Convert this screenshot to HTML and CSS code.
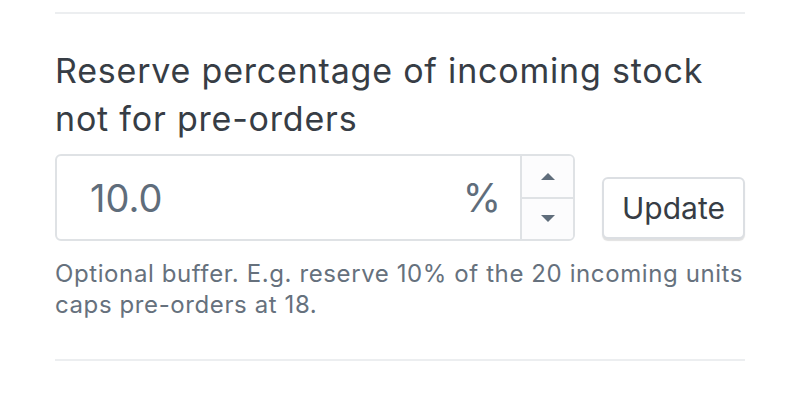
FILE: index.html
```html
<!DOCTYPE html>
<html lang="en">
<head>
<meta charset="utf-8">
<title>Pre-order settings</title>
<link rel="stylesheet" href="styles.css">
</head>
<body>
<div class="section">
  <div class="rule"></div>
  <label class="field-label" for="reserve">Reserve percentage of incoming stock not for pre-orders</label>
  <div class="field-row">
    <div class="number-field">
      <input id="reserve" class="number-input" type="text" value="10.0">
      <span class="suffix">%</span>
      <div class="stepper">
        <button class="step step-up" type="button" aria-label="Increase">
          <svg width="14" height="7" viewBox="0 0 14 7"><path d="M0 7 L7 0 L14 7 Z"/></svg>
        </button>
        <button class="step step-down" type="button" aria-label="Decrease">
          <svg width="14" height="7" viewBox="0 0 14 7"><path d="M0 0 L14 0 L7 7 Z"/></svg>
        </button>
      </div>
    </div>
    <button class="btn" type="button">Update</button>
  </div>
  <p class="help">Optional buffer. E.g. reserve 10% of the 20 incoming units caps pre-orders at 18.</p>
  <div class="rule rule-bottom"></div>
</div>
</body>
</html>
```

FILE: styles.css
```css
html, body {
  margin: 0;
  padding: 0;
  background: #ffffff;
}

body {
  font-family: Inter, "Noto Sans", "Liberation Sans", sans-serif;
  color: #373d45;
}

.section {
  margin: 0 55px;
  padding-top: 12px;
}

.rule {
  height: 2px;
  background: #eceef0;
}

.field-label {
  display: block;
  margin-top: 33px;
  font-size: 34px;
  letter-spacing: 0.8px;
  line-height: 48px;
  font-weight: 400;
  color: #373d45;
}

.field-row {
  display: flex;
  align-items: flex-end;
  gap: 27px;
  margin-top: 11px;
}

.number-field {
  display: flex;
  align-items: stretch;
  width: 520px;
  height: 87px;
  box-sizing: border-box;
  border: 2px solid #dfe2e5;
  border-radius: 6px;
  overflow: hidden;
}

.number-input {
  flex: 1;
  min-width: 0;
  border: 0;
  outline: none;
  padding: 0 0 0 33px;
  font-family: inherit;
  font-size: 38px;
  color: #5f6d7b;
  background: transparent;
}

.suffix {
  display: flex;
  align-items: center;
  padding-right: 19px;
  font-size: 39px;
  color: #5f6d7b;
}

.stepper {
  display: flex;
  flex-direction: column;
  width: 51px;
  border-left: 2px solid #dfe2e5;
}

.step {
  flex: 1;
  display: flex;
  align-items: center;
  justify-content: center;
  padding: 0;
  border: 0;
  background: #fcfcfd;
  fill: #5f6d7b;
}

.step-up {
  border-bottom: 2px solid #dfe2e5;
}

.btn {
  margin-bottom: 2px;
  width: 143px;
  height: 62px;
  box-sizing: border-box;
  border: 2px solid #dcdfe3;
  border-radius: 6px;
  background: #ffffff;
  box-shadow: 0 2px 1px rgba(0, 0, 0, 0.12);
  font-family: inherit;
  font-size: 30px;
  color: #373d45;
}

.help {
  margin: 17px 0 0;
  font-size: 24px;
  letter-spacing: 0.6px;
  line-height: 31px;
  color: #66717d;
}

.rule-bottom {
  margin-top: 39px;
}
```
